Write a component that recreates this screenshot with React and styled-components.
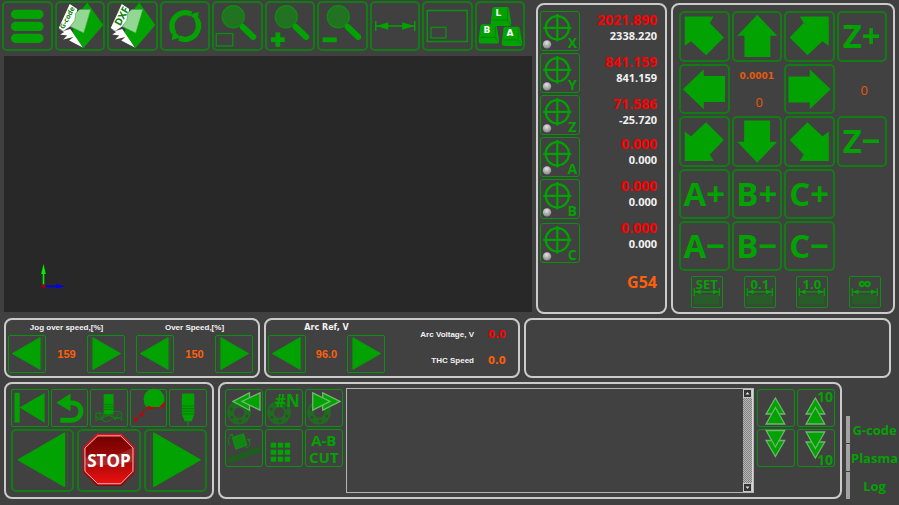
import React from 'react';
import styled, { createGlobalStyle } from 'styled-components';

const GREEN = '#02a202';
const LINE = '#0a920e';
const ORANGE = '#ff5f0a';

const GlobalStyle = createGlobalStyle`
  * {
    box-sizing: border-box;
  }
  body {
    margin: 0;
    background: #404040;
    color: #f2f2f2;
    font-family: "Open Sans", "Noto Sans", sans-serif;
  }
  button {
    font-family: inherit;
    cursor: pointer;
  }
`;

const Page = styled.main`
  display: flex;
  flex-direction: column;
  gap: 4px;
`;

const TopRow = styled.div`
  display: grid;
  grid-template-columns: minmax(0, 1fr) 131px 224px;
  gap: 4px;
  padding: 0 4px 0 2px;
`;

const Workspace = styled.div`
  display: flex;
  flex-direction: column;
  gap: 5px;
  padding: 1px 0 2px;
`;

const Toolbar = styled.div`
  display: grid;
  grid-template-columns: repeat(10, 1fr);
  gap: 2px;
  padding-right: 7px;
`;

const Tile = styled.button`
  display: flex;
  align-items: center;
  justify-content: center;
  width: ${(p) => (p.$w ? `${p.$w}px` : '100%')};
  height: ${(p) => (p.$h ? `${p.$h}px` : '100%')};
  padding: 0;
  border: ${(p) => (p.$r ? `1px solid ${LINE}` : '2px solid #127c14')};
  border-radius: ${(p) => p.$r || 5}px;
  background: transparent;
  color: ${GREEN};

  svg {
    display: block;
    width: 100%;
    height: 100%;
    overflow: visible;
  }
`;

const LetterTile = styled(Tile)`
  font-size: 33px;
  font-weight: 700;
  line-height: 46px;
`;

const Viewport = styled.div`
  flex: 1;
  display: flex;
  align-items: flex-end;
  margin-left: 2px;
  padding: 0 0 20px 32px;
  background: #282828;
`;

const Panel = styled.section`
  border: 2px solid #cbcbcb;
  border-radius: 8px;
  background: #414141;
`;

const DroPanel = styled(Panel)`
  display: flex;
  justify-content: space-between;
  margin-top: 3px;
  padding: 6px 8px 6px 2px;
`;

const AxisButtons = styled.div`
  display: flex;
  flex-direction: column;
  gap: 2px;

  button:last-child {
    margin-top: 2px;
  }
`;

const Readings = styled.div`
  display: flex;
  flex-direction: column;
  align-items: flex-end;
  gap: 8px;
`;

const ReadingGroup = styled.div`
  display: flex;
  flex-direction: column;
  gap: 10px;
`;

const Reading = styled.div`
  text-align: right;
  font-weight: 700;
`;

const WorkPos = styled.div`
  color: #fa0000;
  font-size: 14px;
  line-height: 17px;
`;

const MachinePos = styled.div`
  font-size: 11px;
  line-height: 15px;
`;

const Offset = styled.div`
  margin-top: 13px;
  color: ${ORANGE};
  font-size: 16px;
  font-weight: 700;
  line-height: 20px;
`;

const JogPanel = styled(Panel)`
  margin-top: 3px;
  padding: 6px 6px 4px;
`;

const JogGrid = styled.div`
  display: grid;
  grid-template-columns: repeat(4, 1fr);
  grid-auto-rows: 1fr;
  gap: 2px;
  height: 260px;
`;

const JogReadout = styled.div`
  display: flex;
  flex-direction: column;
  align-items: center;
  justify-content: ${(p) => (p.$single ? 'center' : 'space-between')};
  padding: 5px 0 2px;
  color: #e8590c;
`;

const StepSize = styled.span`
  font: 700 9px/14px "DejaVu Sans", sans-serif;
`;

const StepCount = styled.span`
  padding-left: 5px;
  font-size: 13px;
  line-height: 20px;
`;

const StepRow = styled.div`
  display: grid;
  grid-template-columns: repeat(4, 1fr);
  gap: 2px;
  margin-top: 5px;

  button {
    margin-left: 12px;
  }
`;

const SpeedRow = styled.div`
  display: grid;
  grid-template-columns: 256px 256px minmax(0, 1fr);
  gap: 4px;
  padding: 0 8px 0 4px;
`;

const SpeedPanel = styled(Panel)`
  display: flex;
  justify-content: space-between;
  padding: 0 5px 3px 2px;
`;

const Stepper = styled.div`
  width: 117px;
`;

const StepperLabel = styled.div`
  text-align: center;
  font: ${(p) => (p.$wide ? '700 8px/15px "DejaVu Sans", sans-serif' : '700 8px/15px "Liberation Sans", sans-serif')};
`;

const StepperRow = styled.div`
  display: flex;
  align-items: center;
  justify-content: space-between;
  color: ${ORANGE};
  font: 700 11px/14px "Liberation Sans", sans-serif;
`;

const Status = styled.dl`
  display: grid;
  grid-template-columns: auto 18px;
  align-content: start;
  align-items: center;
  gap: 12px 14px;
  margin: 0;
  padding: 8px 7px 0 0;
`;

const StatusName = styled.dt`
  text-align: right;
  font: 700 8px/14px "Liberation Sans", sans-serif;
`;

const StatusValue = styled.dd`
  margin: 0;
  color: ${(p) => p.$color};
  font: 700 10px/14px "DejaVu Sans", sans-serif;
`;

const BottomRow = styled.div`
  display: grid;
  grid-template-columns: 210px minmax(0, 1fr) 53px;
  gap: 4px;
  padding-left: 4px;
`;

const RunPanel = styled(Panel)`
  display: flex;
  flex-direction: column;
  gap: 2px;
  padding: 5px;
`;

const Columns = styled.div`
  display: grid;
  grid-template-columns: repeat(${(p) => p.$n}, 1fr);
  gap: ${(p) => p.$gap}px;
`;

const ProgramPanel = styled(Panel)`
  display: flex;
  gap: 3px;
  padding: 4px 5px;
`;

const ToolGrid = styled.div`
  display: grid;
  grid-template-columns: repeat(${(p) => p.$n}, 38px);
  gap: 2px;
  align-content: start;
  padding-top: 1px;
`;

const CodeFrame = styled.div`
  flex: 1;
  display: flex;
  height: 105px;
  border: 1px solid #b4b4b4;
`;

const CodeArea = styled.textarea`
  flex: 1;
  min-width: 0;
  padding: 2px 4px;
  border: 0;
  outline: 0;
  resize: none;
  overflow: hidden;
  background: transparent;
  color: #f2f2f2;
  font: 10px/12px "Liberation Mono", monospace;
`;

const ScrollTrack = styled.div`
  display: flex;
  flex-direction: column;
  justify-content: space-between;
  width: 10px;
  border-right: 1px solid #d8d8d8;
  background: repeating-conic-gradient(#b8b8b8 0 25%, #808080 0 50%) 0 0 / 2px 2px;
`;

const ScrollButton = styled.button`
  width: 9px;
  height: 9px;
  padding: 0;
  border: 1px solid #c8c8c8;
  background: #333;
  color: #ddd;

  svg {
    display: block;
  }
`;

const Tabs = styled.nav`
  display: flex;
  flex-direction: column;
  justify-content: flex-end;
  gap: 1px;
`;

const Tab = styled.button`
  height: 27px;
  padding: 2px 0 0;
  border: 0;
  border-left: 4px solid #a2a2a2;
  background: transparent;
  color: ${GREEN};
  font-size: 13px;
  font-weight: 700;
  line-height: 25px;
  white-space: nowrap;
`;

const SvgText = styled.text`
  fill: ${(p) => p.$fill || GREEN};
  font-family: ${(p) => p.$family || '"Open Sans", sans-serif'};
  font-size: ${(p) => p.$size}px;
  font-weight: ${(p) => p.$weight || 700};
`;

const Icon = ({ size = 50, children }) => {
  // the view box starts inside the tile border
  const edge = size === 50 || size === 63 ? 2 : 1;
  const inner = size - edge * 2;
  return (
    <svg viewBox={`${edge} ${edge} ${inner} ${inner}`} fill={GREEN} aria-hidden="true">
      {children}
    </svg>
  );
};

const MenuIcon = () => (
  <Icon>
    <rect x="8.7" y="8.7" width="32.6" height="9.2" rx="4.5" />
    <rect x="8.7" y="20.8" width="32.6" height="9.2" rx="4.5" />
    <rect x="8.7" y="32.7" width="32.6" height="9.2" rx="4.5" />
  </Icon>
);

const FileIcon = ({ text, size, x, y }) => (
  <Icon>
    <path d="M32 1.5 48 24 28 47.5 17 32 22 14Z" />
    <path fill="#fff" d="M14.5 3 22 8 20 20 15.5 25 8 30 3.5 27Z" />
    <path fill="#fff" d="M3.5 28 8 30 15 28 27.5 46.5 14 39.5 18 36 8 38.5 12 34.5 5 33.5 9 31Z" />
    <path fill="#94d694" stroke="#3aa83a" strokeWidth="0.6" d="M24.5 8.5 35.5 8.5 28.5 32 15 25.5 19.5 19.5 20.5 12Z" />
    <SvgText $size={size} $fill="#078007" transform={`translate(${x} ${y}) rotate(-62)`}>{text}</SvgText>
  </Icon>
);

const RefreshIcon = () => (
  <Icon>
    <g fill="none" stroke={GREEN} strokeWidth="5.4">
      <path d="M13.5 32 A13.5 13.5 0 0 1 31 13" />
      <path d="M36.5 18 A13.5 13.5 0 0 1 19 37" />
    </g>
    <path d="M29.5 13.5 38.5 11 37 21Z" />
    <path d="M20.5 36.5 11.5 39 13 29Z" />
  </Icon>
);

const Lens = () => (
  <>
    <circle cx="21" cy="15.7" r="11" fill="#217221" stroke="#0f8a12" strokeWidth="1.4" />
    <path d="M30.5 26 41 36" stroke={GREEN} strokeWidth="6" strokeLinecap="round" />
    <path d="M28.5 23.5 31 26" stroke={GREEN} strokeWidth="2.5" />
  </>
);

const ZoomBoxIcon = () => (
  <Icon>
    <Lens />
    <rect x="4" y="32.5" width="16.5" height="12.5" fill="none" stroke={LINE} strokeWidth="1.3" />
  </Icon>
);

const ZoomInIcon = () => (
  <Icon>
    <Lens />
    <path d="M10.2 31.6h4.8v4.7h4.6v4.8h-4.6v4.7h-4.8v-4.7H5.6v-4.8h4.6z" />
  </Icon>
);

const ZoomOutIcon = () => (
  <Icon>
    <Lens />
    <rect x="5.3" y="36.4" width="14.3" height="4.8" />
  </Icon>
);

const MeasureIcon = () => (
  <Icon>
    <path d="M5.5 20v10M44.5 20v10M6 25h38" stroke={GREEN} strokeWidth="1.4" />
    <path d="M6 25 18 21.3v7.4zM44 25 32 21.3v7.4z" />
  </Icon>
);

const FrameIcon = () => (
  <Icon>
    <rect x="5" y="9.5" width="40" height="31" fill="none" stroke={LINE} strokeWidth="1.5" />
    <rect x="8.7" y="26.4" width="15" height="10.6" fill="none" stroke={LINE} strokeWidth="1.3" />
  </Icon>
);

const Key = ({ x, y, letter }) => (
  <g transform={`translate(${x} ${y})`}>
    <path d="M3.8 0.3 H16.2 Q18 0.3 18.3 2 L20.6 16 Q20.9 19.4 19 19.4 H2 Q-0.1 19.4 0.2 16 L1.9 2 Q2.2 0.3 3.8 0.3Z" />
    <path d="M2 13.4h14.6l3.2 4.6M17.4 2l-0.8 11.4" fill="none" stroke="#0a6e0a" strokeWidth="0.6" />
    <SvgText $size={9} $fill="#fff" $family={'"DejaVu Sans", sans-serif'} x="5" y="9.2">{letter}</SvgText>
  </g>
);

const KeysIcon = () => (
  <Icon>
    <Key x={15.3} y={5.6} letter="L" />
    <Key x={3.2} y={23} letter="B" />
    <Key x={26.3} y={25.5} letter="A" />
  </Icon>
);

const AxisIcon = ({ letter }) => (
  <Icon size={40}>
    <defs>
      <radialGradient id={`led-${letter}`} cx="45%" cy="30%" r="65%">
        <stop offset="0" stopColor="#e2e2e2" />
        <stop offset="1" stopColor="#8c8c8c" />
      </radialGradient>
    </defs>
    <circle cx="17.3" cy="16.8" r="11.6" fill="none" stroke={GREEN} strokeWidth="2.2" />
    <path d="M17.3 3v27.6M3.3 16.8h28" stroke={GREEN} strokeWidth="2.2" />
    <circle cx="7" cy="33.4" r="4.2" fill={`url(#led-${letter})`} />
    <SvgText $size={14} x="32.3" y="37.4" textAnchor="middle">{letter}</SvgText>
  </Icon>
);

const StraightArrow = ({ turn }) => (
  <Icon>
    <path transform={`rotate(${turn} 25 25)`} d="M25 3.8 44.8 24.5H38V45.6H12.3V24.5H5.3Z" />
  </Icon>
);

const DiagonalArrow = ({ flipX, flipY }) => (
  <Icon>
    <path
      transform={`translate(${flipX ? 50 : 0} ${flipY ? 50 : 0}) scale(${flipX ? -1 : 1} ${flipY ? -1 : 1})`}
      d="M5.7 5.5H34.3L30.5 12 44.4 26.2 26.8 43.8 12 30 5.7 34.5Z"
    />
  </Icon>
);

const StepIcon = ({ text }) => (
  <Icon size={32}>
    <rect x="3" y="18.6" width="25.6" height="10" fill="#285c28" />
    <path d="M3.3 12v8M28.3 12v8M3.5 15.8h24.5" stroke={GREEN} strokeWidth="1.2" />
    <path d="M3.8 15.8 9.5 13.4v4.8zM27.8 15.8 22 13.4v4.8z" />
    <SvgText $size={text === '∞' ? 20 : 13} x="15.8" y={text === '∞' ? 15 : 12.6} textAnchor="middle">{text}</SvgText>
  </Icon>
);

const Triangle = ({ right, size = 38 }) => (
  <Icon size={size}>
    <g transform={`${right ? `translate(${size} 0) scale(-1 1)` : ''} scale(${size / 38})`}>
      <path d="M4.3 18.6 32.2 2.4V34.6Z" stroke={GREEN} strokeWidth="0.8" strokeLinejoin="round" />
      <path d="M34 1.5v34.5" stroke="#147014" strokeWidth="0.5" />
    </g>
  </Icon>
);

const RewindIcon = () => (
  <Icon size={38}>
    <path d="M3.5 3.5h5.3v30.2H3.5zM8.6 18.6 34 3.8v30z" />
  </Icon>
);

const UndoIcon = () => (
  <Icon size={38}>
    <path d="M5.3 13.6 19.7 4.4V22.4Z" />
    <path d="M18 13.8H21.5C33.5 13.8 33.5 31.3 20 31.3H9.3" fill="none" stroke={GREEN} strokeWidth="5" />
  </Icon>
);

const PierceIcon = () => (
  <Icon size={38}>
    <path d="M13.8 5h10v20.5h-10z" />
    <path d="M14 15.5h9.6M14 18h9.6M14 20.5h9.6" stroke="#087408" strokeWidth="0.7" />
    <path
      d="M6 24.5q4-2 8 1t8-1 10-.5M6 28q5 3 9 0t8 0 9 0M6.5 31.5q4-3 7 0t8-1 11 1M6 24v8M32 24v8M9 24l4 7M15 24l-3 7M21 25l5 6M29 24l-4 7"
      fill="none"
      stroke="#0d840d"
      strokeWidth="1"
    />
  </Icon>
);

const LeadInIcon = () => (
  <Icon size={38}>
    <path d="M14 12a10.5 10.5 0 1 1 20 2l-4 4H17q-3-2-3-6Z" />
    <path d="M6 30.5 17 18.8H29L34.5 14" fill="none" stroke="#c80000" strokeWidth="1" strokeDasharray="4 1" />
    <circle cx="6" cy="30.6" r="2" fill="#c80000" />
    <path fill="#c80000" d="M9 25.5 14.5 22.5 12 28ZM18 16.5 23.5 18.8 18 21ZM30 18.8 35 12.5V17.5Z" />
  </Icon>
);

const TorchIcon = () => (
  <Icon size={38}>
    <path d="M13 5.8q0-1.4 1.4-1.4h9.8q1.4 0 1.4 1.4V25l-2.6 7.3h-7.2L13 25Z" />
    <path d="M13 17h12.6M13 19.6h12.6M13 22.2h12.6M13.4 25h12" stroke="#087408" strokeWidth="0.8" />
    <path d="M19.3 32v5" stroke={GREEN} strokeWidth="0.9" />
  </Icon>
);

const StopIcon = () => (
  <Icon size={63}>
    <defs>
      <linearGradient id="stop-fill" x1="0" y1="0" x2="0" y2="1">
        <stop offset="0" stopColor="#740000" />
        <stop offset="0.5" stopColor="#a00808" />
        <stop offset="1" stopColor="#f01010" />
      </linearGradient>
      <linearGradient id="stop-rim" x1="0" y1="0" x2="0" y2="1">
        <stop offset="0" stopColor="#e81010" />
        <stop offset="1" stopColor="#8a0404" />
      </linearGradient>
    </defs>
    <g transform="translate(0.8 0)">
      <path fill="url(#stop-rim)" d="M19 4.7H43.5L57 18.2V43.2L43.5 57H19L5 43.2V18.2Z" />
      <path fill="url(#stop-fill)" stroke="#f3d6d6" strokeWidth="0.9" d="M19.8 6.9H42.7L55 19.1V42.3L42.7 54.8H19.8L7 42.3V19.1Z" />
      <path fill="#fff" opacity="0.13" d="M7.5 29Q38 29 54.6 18.5V33Q32 37 7.5 36Z" />
      <SvgText $size={17} $fill="#fff" x="31" y="37.7" textAnchor="middle">STOP</SvgText>
    </g>
  </Icon>
);

const HOLES = [0, 60, 120, 180, 240, 300];

const Flange = () => (
  <g>
    <path
      fill="#1f6c1f"
      fillRule="evenodd"
      d="M2 23.6a12 12 0 1 0 24 0a12 12 0 1 0 -24 0ZM8.8 23.6a5.2 5.2 0 1 1 10.4 0a5.2 5.2 0 1 1 -10.4 0Z"
    />
    {HOLES.map((a) => (
      <circle key={a} cx="22.6" cy="23.6" r="1.5" fill="#414141" transform={`rotate(${a + 25} 14 23.6)`} />
    ))}
  </g>
);

const PrevIcon = () => (
  <Icon size={38}>
    <Flange />
    <g stroke="#6fb56f" strokeWidth="1.3">
      <path d="M8 12.4 24.5 3.8V21.2Z" />
      <path d="M17 12.4 35 3.8V21.2Z" />
    </g>
  </Icon>
);

const NextIcon = () => (
  <Icon size={38}>
    <Flange />
    <g stroke="#6fb56f" strokeWidth="1.3">
      <path d="M35 12.4 17.7 3.8V21.2Z" />
      <path d="M25 12.4 7.7 3.8V21.2Z" />
    </g>
  </Icon>
);

const NumberIcon = () => (
  <Icon size={38}>
    <Flange />
    <SvgText $size={17} x="22.5" y="18.4" textAnchor="middle">#N</SvgText>
  </Icon>
);

const RotateIcon = () => (
  <Icon size={38}>
    <path fill="#1f5c1f" d="M2.3 28.7 34.3 17 36 23.2 4 35Z" />
    <path fill="#148414" stroke={GREEN} strokeWidth="0.8" d="M7.3 8.3 18.7 4.9 21.8 16.3 10.7 20.2Z" />
    <path d="M4.5 16.5Q1.5 9.5 6.5 5.5M24 11.5Q27 17 20.5 19" fill="none" stroke="#118411" strokeWidth="1" />
    <path fill="#118411" d="M4 5h4v3zM22 10l4-.5-1.5 4z" />
  </Icon>
);

const CELLS = [0, 1, 2];

const MatrixIcon = () => (
  <Icon size={38}>
    <path d="M6 1v36M13 1v36M20 1v36M27 1v36M34 1v36M1 5h36M1 12h36M1 19h36M1 26h36M1 33h36" stroke="#3a453a" strokeWidth="0.5" />
    {CELLS.map((r) => CELLS.map((c) => (
      <rect key={`${r}${c}`} x={5.7 + c * 7} y={13.7 + r * 7} width="5.4" height="5" />
    )))}
  </Icon>
);

const CutIcon = () => (
  <Icon size={38}>
    <SvgText $size={15} x="18.8" y="17.4" textAnchor="middle">A-B</SvgText>
    <SvgText $size={15} x="18.8" y="34.4" textAnchor="middle">CUT</SvgText>
  </Icon>
);

const MoveIcon = ({ down, ten }) => (
  <Icon size={38}>
    <g stroke="#6fb56f" strokeWidth="1.3" transform={down ? `translate(0 ${ten ? 38 : 36.5}) scale(1 -1)` : undefined}>
      <path d="M18.4 9 27.7 25H9.1Z" />
      <path d="M18.4 18.5 27.7 35H9.1Z" />
    </g>
    {ten && <SvgText $size={14} x="28" y={down ? 35.6 : 12.8} textAnchor="middle">10</SvgText>}
  </Icon>
);

const OriginMarker = () => (
  <svg width="32" height="28" viewBox="0 0 32 28" aria-hidden="true">
    <path d="M7.5 22V8" stroke="#00f000" strokeWidth="1.6" />
    <path d="M7.5 0 9.8 10H5.2Z" fill="#00f000" />
    <path d="M8 22.3H22" stroke="#0000f0" strokeWidth="1.8" />
    <path d="M29 22.3 20 20V24.6Z" fill="#0000f0" />
    <circle cx="7.5" cy="22.3" r="2" fill="#a00000" />
  </svg>
);

const toolbar = [
  ['Menu', <MenuIcon />],
  ['Open G-code', <FileIcon text="G-code" size={7} x={8.5} y={28.5} />],
  ['Open DXF', <FileIcon text="DXF" size={10} x={13} y={25.5} />],
  ['Reload', <RefreshIcon />],
  ['Zoom area', <ZoomBoxIcon />],
  ['Zoom in', <ZoomInIcon />],
  ['Zoom out', <ZoomOutIcon />],
  ['Measure', <MeasureIcon />],
  ['Show table', <FrameIcon />],
  ['Hot keys', <KeysIcon />],
];

const axes = [
  ['X', '2021.890', '2338.220'],
  ['Y', '841.159', '841.159'],
  ['Z', '71.586', '-25.720'],
  ['A', '0.000', '0.000'],
  ['B', '0.000', '0.000'],
  ['C', '0.000', '0.000'],
];

const AxisReadings = ({ rows }) => (
  <ReadingGroup>
    {rows.map(([axis, work, machine]) => (
      <Reading key={axis}>
        <WorkPos>{work}</WorkPos>
        <MachinePos>{machine}</MachinePos>
      </Reading>
    ))}
  </ReadingGroup>
);

const SpeedStepper = ({ label, value, wide }) => (
  <Stepper>
    <StepperLabel $wide={wide}>{label}</StepperLabel>
    <StepperRow>
      <Tile $w={38} $h={38} $r={2} aria-label={`${label} down`}><Triangle /></Tile>
      {value}
      <Tile $w={38} $h={38} $r={2} aria-label={`${label} up`}><Triangle right /></Tile>
    </StepperRow>
  </Stepper>
);

const App = () => {
  return (
    <>
      <GlobalStyle />
      <Page>
        <TopRow>
          <Workspace>
            <Toolbar>
              {toolbar.map(([name, icon]) => (
                <Tile key={name} $h={50} aria-label={name}>{icon}</Tile>
              ))}
            </Toolbar>
            <Viewport>
              <OriginMarker />
            </Viewport>
          </Workspace>

          <DroPanel>
            <AxisButtons>
              {axes.map(([axis]) => (
                <Tile key={axis} $w={40} $h={40} $r={3} aria-label={`Zero ${axis}`}>
                  <AxisIcon letter={axis} />
                </Tile>
              ))}
            </AxisButtons>
            <Readings>
              <AxisReadings rows={axes.slice(0, 3)} />
              <AxisReadings rows={axes.slice(3)} />
              <Offset>G54</Offset>
            </Readings>
          </DroPanel>

          <JogPanel>
            <JogGrid>
              <Tile aria-label="Jog up left"><DiagonalArrow /></Tile>
              <Tile aria-label="Jog up"><StraightArrow turn={0} /></Tile>
              <Tile aria-label="Jog up right"><DiagonalArrow flipX /></Tile>
              <LetterTile>Z+</LetterTile>
              <Tile aria-label="Jog left"><StraightArrow turn={-90} /></Tile>
              <JogReadout>
                <StepSize>0.0001</StepSize>
                <StepCount>0</StepCount>
              </JogReadout>
              <Tile aria-label="Jog right"><StraightArrow turn={90} /></Tile>
              <JogReadout $single>
                <StepCount>0</StepCount>
              </JogReadout>
              <Tile aria-label="Jog down left"><DiagonalArrow flipY /></Tile>
              <Tile aria-label="Jog down"><StraightArrow turn={180} /></Tile>
              <Tile aria-label="Jog down right"><DiagonalArrow flipX flipY /></Tile>
              <LetterTile>Z−</LetterTile>
              <LetterTile>A+</LetterTile>
              <LetterTile>B+</LetterTile>
              <LetterTile>C+</LetterTile>
              <span />
              <LetterTile>A−</LetterTile>
              <LetterTile>B−</LetterTile>
              <LetterTile>C−</LetterTile>
            </JogGrid>
            <StepRow>
              {['SET', '0.1', '1.0', '∞'].map((step) => (
                <Tile key={step} $w={32} $h={32} $r={2}><StepIcon text={step} /></Tile>
              ))}
            </StepRow>
          </JogPanel>
        </TopRow>

        <SpeedRow>
          <SpeedPanel>
            <SpeedStepper label="Jog over speed,[%]" value="159" />
            <SpeedStepper label="Over Speed,[%]" value="150" />
          </SpeedPanel>
          <SpeedPanel>
            <SpeedStepper label="Arc Ref, V" value="96.0" wide />
            <Status>
              <StatusName>Arc Voltage, V</StatusName>
              <StatusValue $color="#fa0000">0.0</StatusValue>
              <StatusName>THC Speed</StatusName>
              <StatusValue $color={ORANGE}>0.0</StatusValue>
            </Status>
          </SpeedPanel>
          <Panel />
        </SpeedRow>

        <BottomRow>
          <RunPanel>
            <Columns $n={5} $gap={2}>
              <Tile $h={38} $r={2} aria-label="Rewind"><RewindIcon /></Tile>
              <Tile $h={38} $r={2} aria-label="Back"><UndoIcon /></Tile>
              <Tile $h={38} $r={2} aria-label="Pierce"><PierceIcon /></Tile>
              <Tile $h={38} $r={2} aria-label="Lead in"><LeadInIcon /></Tile>
              <Tile $h={38} $r={2} aria-label="Torch"><TorchIcon /></Tile>
            </Columns>
            <Columns $n={3} $gap={3}>
              <Tile $h={63} aria-label="Run backward"><Triangle size={63} /></Tile>
              <Tile $h={63}><StopIcon /></Tile>
              <Tile $h={63} aria-label="Run forward"><Triangle size={63} right /></Tile>
            </Columns>
          </RunPanel>

          <ProgramPanel>
            <ToolGrid $n={3}>
              <Tile $h={38} $r={3} aria-label="Previous part"><PrevIcon /></Tile>
              <Tile $h={38} $r={3}><NumberIcon /></Tile>
              <Tile $h={38} $r={3} aria-label="Next part"><NextIcon /></Tile>
              <Tile $h={38} $r={3} aria-label="Rotate sheet"><RotateIcon /></Tile>
              <Tile $h={38} $r={3} aria-label="Array"><MatrixIcon /></Tile>
              <Tile $h={38} $r={3}><CutIcon /></Tile>
            </ToolGrid>
            <CodeFrame>
              <CodeArea aria-label="Program" />
              <ScrollTrack>
                <ScrollButton aria-label="Scroll up">
                  <svg width="7" height="7" fill="currentColor"><path d="M3.5 2 5.5 4.5h-4z" /></svg>
                </ScrollButton>
                <ScrollButton aria-label="Scroll down">
                  <svg width="7" height="7" fill="currentColor"><path d="M3.5 5 1.5 2.5h4z" /></svg>
                </ScrollButton>
              </ScrollTrack>
            </CodeFrame>
            <ToolGrid $n={2}>
              <Tile $h={38} $r={3} aria-label="Line up"><MoveIcon /></Tile>
              <Tile $h={38} $r={3}><MoveIcon ten /></Tile>
              <Tile $h={38} $r={3} aria-label="Line down"><MoveIcon down /></Tile>
              <Tile $h={38} $r={3}><MoveIcon down ten /></Tile>
            </ToolGrid>
          </ProgramPanel>

          <Tabs>
            <Tab>G-code</Tab>
            <Tab>Plasma</Tab>
            <Tab>Log</Tab>
          </Tabs>
        </BottomRow>
      </Page>
    </>
  );
};

export default App;
